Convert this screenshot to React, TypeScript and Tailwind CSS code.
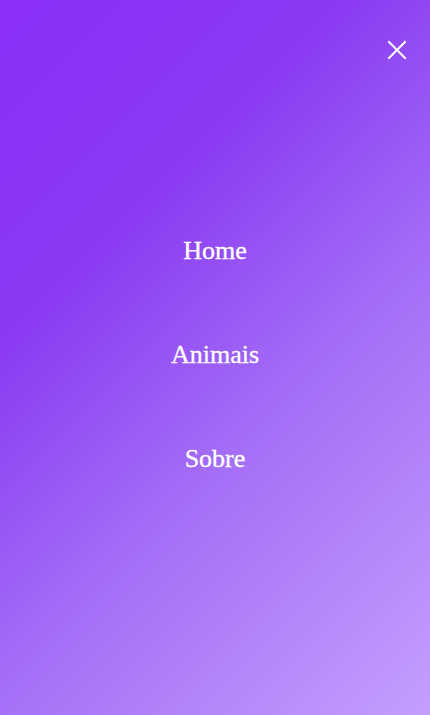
import React from "react";

export default function App() {
  return (
    <div className="relative w-full h-[715px] overflow-hidden bg-[linear-gradient(135deg,#8a2ff8_0%,#8a3af2_30%,#a46ef7_60%,#c49ffd_100%)]">
      <button className="absolute right-[22px] top-[39px] w-[22px] h-[22px] text-white" aria-label="Fechar">
        <svg viewBox="0 0 22 22" width="22" height="22" fill="none" stroke="currentColor" strokeWidth="2" strokeLinecap="square">
          <path d="M3 3L19 19M19 3L3 19" />
        </svg>
      </button>
      <nav className="h-full pb-[5px] flex flex-col items-center justify-center gap-[70px] font-['Liberation_Serif',serif] text-white text-[26px] leading-[34px] [-webkit-text-stroke:0.3px_white]">
        <a>Home</a>
        <a>Animais</a>
        <a>Sobre</a>
      </nav>
    </div>
  );
}
